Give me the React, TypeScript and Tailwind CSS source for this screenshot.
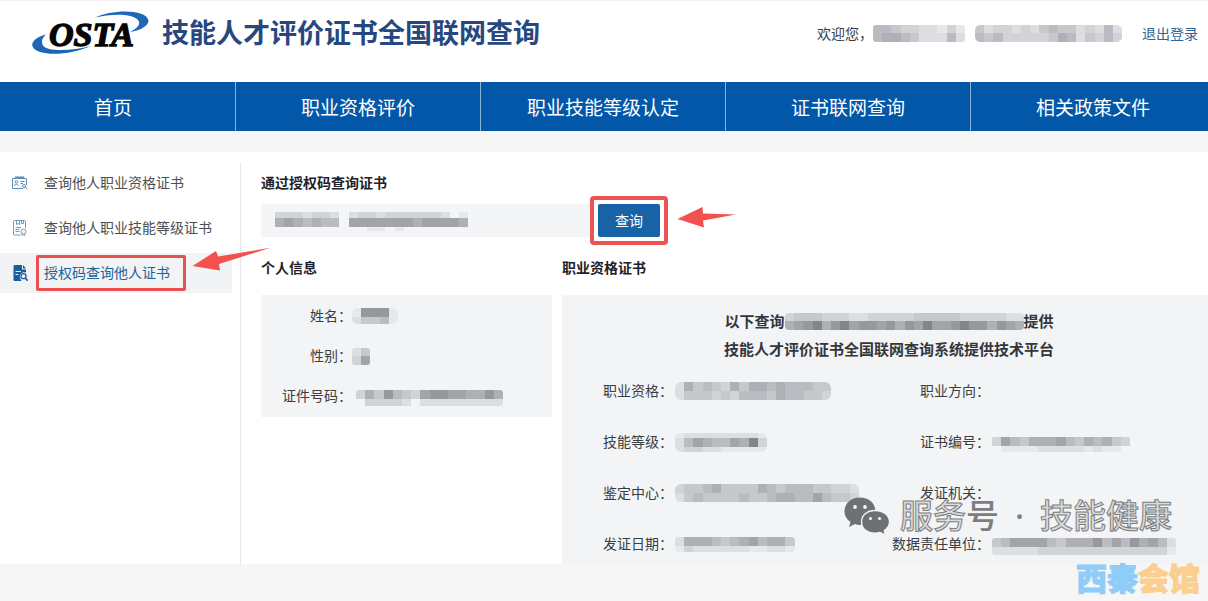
import type { ReactNode } from "react";

const SHADES: Record<string, string> = {
  "1": "#e6e8eb",
  "2": "#dcdee1",
  "3": "#d1d3d7",
  "4": "#c6c8cc",
  "5": "#bbbcc1",
  "6": "#afb0b6",
  "7": "#a3a4aa",
  "8": "#97989e",
  "9": "#84858b",
};

/* Pixelated block hiding private data. Each string is a row of grey levels. */
function Mosaic({
  id,
  rows,
  heights,
  radius = 0,
  className = "",
}: {
  id: string;
  rows: string[];
  heights: number[];
  radius?: number;
  className?: string;
}) {
  const cell = 9.2;
  const width = Math.round(rows[0].length * cell);
  const height = heights.reduce((a, b) => a + b, 0);
  let y = 0;
  return (
    <svg
      width={width}
      height={height}
      viewBox={`0 0 ${width} ${height}`}
      className={`shrink-0 ${className}`}
      aria-hidden="true"
      shapeRendering="crispEdges"
    >
      <clipPath id={id}>
        <rect width={width} height={height} rx={radius} />
      </clipPath>
      <g clipPath={`url(#${id})`}>
        {rows.map((row, r) => {
          const top = y;
          y += heights[r];
          return [...row].map((c, i) =>
            SHADES[c] ? (
              <rect key={`${r}-${i}`} x={i * cell} y={top} width={cell} height={heights[r]} fill={SHADES[c]} />
            ) : null,
          );
        })}
      </g>
    </svg>
  );
}

function Logo() {
  return (
    <svg width="120" height="48" viewBox="30 10 120 48" role="img" aria-label="OSTA" className="shrink-0">
      <path
        d="M95 17.5C112 9 147 9 148.500 20.500C148.500 26 141 30 130 32C139 27.500 141.500 23 137 19C129 13 110 14 95 17.500Z"
        fill="#1f67b5"
      />
      <path
        d="M46 34.500C36 37 31 42 32.500 46.500C37 56.500 69 56 91 46C72 51 47 52 43 45.500C41 41.500 42 38 46 34.500Z"
        fill="#1f67b5"
      />
      <text
        x="49"
        y="46"
        fontFamily="Liberation Serif, serif"
        fontWeight="700"
        fontStyle="italic"
        fontSize="34"
        fill="#050505"
        stroke="#050505"
        strokeWidth="1.4"
      >
        OSTA
      </text>
    </svg>
  );
}

function CardIcon() {
  return (
    <svg width="16" height="16" viewBox="0 0 16 16" fill="none" stroke="#5c8fb5" className="shrink-0" aria-hidden="true">
      <path d="M11 13.500H0.500V3.500H14.500V10" />
      <path d="M3.500 3.200V2.200H11.500V3.200" strokeWidth="1.400" />
      <path d="M2.500 11C2.500 8.800 6.500 8.800 6.500 11M8.500 6.500H12.500M8.500 8.500H11" />
      <circle cx="4.500" cy="6.900" r="1.300" />
      <circle cx="12" cy="11" r="1.500" />
      <path d="M13.200 12.200L15.500 14" />
    </svg>
  );
}

function BadgeIcon() {
  return (
    <svg width="16" height="16" viewBox="0 0 16 16" fill="none" stroke="#6b9dbd" className="shrink-0" aria-hidden="true">
      <path d="M8.500 15H2.500C1.900 15 1.500 14.600 1.500 14V1.500C1.500 0.900 1.900 0.500 2.500 0.500H12.500C13.100 0.500 13.500 0.900 13.500 1.500V8" />
      <path d="M4.500 0.500V4.500L6 3.500L7.500 4.500V0.500M9.500 0.500V3.500H11.500V0.500M3.500 7.500H9M3.500 9.500H7.500M3.500 11.500H7.500" />
      <circle cx="11.500" cy="11.500" r="2.500" />
      <path d="M10 13.500V15.500L11.500 14.800L13 15.500V13.500" strokeWidth="0.800" />
    </svg>
  );
}

function SearchDocIcon() {
  return (
    <svg width="16" height="16" viewBox="0 0 16 16" className="shrink-0" aria-hidden="true">
      <path
        d="M3 0H10V4.500H14V7.500C10.500 6.500 7.800 8.600 7.800 11.300C7.800 13 8.500 14.800 9.700 16H3C2 16 1.500 15.500 1.500 14.500V1.500C1.500 0.500 2 0 3 0Z"
        fill="#155f9f"
      />
      <path d="M11 0L14 3.500H11Z" fill="#155f9f" />
      <path d="M3.500 6.500H9M3.500 9.500H6.500" stroke="#e8f0f6" />
      <circle cx="11.500" cy="11.200" r="2.500" fill="#f3f4f5" stroke="#155f9f" strokeWidth="1.300" />
      <path d="M13.200 13L15.700 15.700" stroke="#155f9f" strokeWidth="1.600" />
    </svg>
  );
}

function WechatIcon() {
  return (
    <svg width="46" height="38" viewBox="0 0 46 38" aria-hidden="true">
      <path
        d="M16 0.500C7 0.500 0.500 6.500 0.500 14.500C0.500 19 2.800 22.500 6.500 25L5 30L11 27C12.700 27.600 14.300 28 16 28C25 28 31.500 22 31.500 14.500C31.500 6.500 25 0.500 16 0.500Z"
        fill="#6f7072"
      />
      <path
        d="M31 13.500C23 13.500 17.500 18.500 17.500 25C17.500 31.500 23 36.300 31 36.300C32.700 36.300 34.500 36 36 35.500L41.500 38L40.300 33.500C43.500 31.500 45.500 28.500 45.500 25C45.500 18.500 39.500 13.500 31 13.500Z"
        fill="#6f7072"
        stroke="#f2f4f6"
        strokeWidth="1.400"
      />
      <g fill="#f2f4f6">
        <circle cx="11" cy="10" r="1.900" />
        <circle cx="21" cy="10" r="1.900" />
        <circle cx="26.500" cy="21.500" r="1.600" />
        <circle cx="35.500" cy="21.500" r="1.600" />
      </g>
    </svg>
  );
}

const NAV = ["首页", "职业资格评价", "职业技能等级认定", "证书联网查询", "相关政策文件"];

function SideLink({ icon, children, active = false }: { icon: ReactNode; children: string; active?: boolean }) {
  return (
    <a
      href="#"
      className={`relative mr-2 flex h-10 items-center gap-4 pl-3 text-sm ${
        active ? "bg-[#f2f3f5] text-[#20619c]" : "text-[#4c4f54]"
      }`}
    >
      {icon}
      <span className="relative whitespace-nowrap">
        {children}
        {active && <span className="absolute -inset-y-2 -left-2 -right-4 rounded-xs border-3 border-[#e9504f]" />}
      </span>
      {active && (
        <svg width="80" height="24" viewBox="0 0 80 24" className="absolute -top-1.5 left-48 z-10" aria-hidden="true">
          <path d="M0.500 19L24 4L26 9.500L78.500 0.800L27 17L28 23.500Z" fill="#f25150" />
        </svg>
      )}
    </a>
  );
}

function Field({ label, labelClass, children }: { label: string; labelClass: string; children?: ReactNode }) {
  return (
    <div className="flex h-10 items-center text-sm text-[#3a3d42]">
      <dt className={`shrink-0 whitespace-nowrap text-right ${labelClass}`}>{label}</dt>
      <dd>{children}</dd>
    </div>
  );
}

export default function App() {
  return (
    <div className="relative min-h-screen overflow-x-hidden bg-[#f6f6f6] font-['Noto_Sans','Noto_Sans_CJK_SC',sans-serif] text-sm text-[#3a3d42]">
      <header className="flex h-[82px] items-center justify-between border-t border-[#f1f1f1] bg-white pr-2.5 pb-4 pl-[30px]">
        <div className="flex items-center gap-3">
          <Logo />
          <h1 className="whitespace-nowrap pb-0.5 text-[27px] leading-9 font-bold text-[#27477f]">
            技能人才评价证书全国联网查询
          </h1>
        </div>
        <div className="flex items-center whitespace-nowrap">
          <span>欢迎您，</span>
          <Mosaic id="m-user" rows={["5543322131", "5665422252"]} heights={[8, 9]} radius={3} />
          <Mosaic
            id="m-account"
            rows={["4233232454423252", "5453333346524353"]}
            heights={[8, 9]}
            radius={5}
            className="ml-2.5"
          />
          <a href="#" className="ml-5 text-[#2d6597]">
            退出登录
          </a>
        </div>
      </header>

      <nav className="overflow-hidden bg-[#0357a8]">
        <ul className="-mr-2 -ml-[9px] grid grid-cols-5">
          {NAV.map((item) => (
            <li key={item} className="border-r border-[#8db6d6]">
              <a href="#" className="flex h-[49px] items-center justify-center pt-1 text-[19px] text-white">
                {item}
              </a>
            </li>
          ))}
        </ul>
      </nav>

      <main className="mt-[21px] flex bg-white pt-2.5">
        <aside className="flex w-[241px] shrink-0 flex-col gap-[5px] border-r border-[#e6e7e9] pt-px">
          <SideLink icon={<CardIcon />}>查询他人职业资格证书</SideLink>
          <SideLink icon={<BadgeIcon />}>查询他人职业技能等级证书</SideLink>
          <SideLink icon={<SearchDocIcon />} active>
            授权码查询他人证书
          </SideLink>
        </aside>

        <div className="min-w-0 flex-1 pl-5">
          <form onSubmit={(e) => e.preventDefault()}>
            <label htmlFor="code" className="flex h-[42px] items-center font-bold text-[#1f2329]">
              通过授权码查询证书
            </label>
            <div className="flex gap-2">
              <div className="relative">
                <input id="code" type="text" className="block h-[33px] w-[329px] bg-[#f4f5f6] px-3 outline-none" />
                <div className="pointer-events-none absolute top-2 left-3.5">
                  <Mosaic
                    id="m-code"
                    rows={["333233202332333333201", "676565507777777677776", "000000000011010000000"]}
                    heights={[6, 9, 4]}
                  />
                </div>
              </div>
              <div className="relative">
                <button type="submit" className="block h-[33px] w-[62px] rounded-xs bg-[#1863a6] text-white">
                  查询
                </button>
                <span className="pointer-events-none absolute -inset-2 rounded-sm border-4 border-[#ec5453]" />
                <svg
                  width="60"
                  height="22"
                  viewBox="0 0 60 22"
                  className="absolute top-0.5 left-[79px]"
                  aria-hidden="true"
                >
                  <path d="M0.500 13L25.500 1L26 7.500L59 8.500L26 14.500L27 21.500Z" fill="#f25150" />
                </svg>
              </div>
            </div>
          </form>

          <div className="mt-1 flex gap-2.5">
            <section className="w-[291px] shrink-0">
              <h2 className="flex h-[54px] items-center font-bold text-[#1f2329]">个人信息</h2>
              <dl className="bg-[#f2f4f6] py-px">
                <Field label="姓名：" labelClass="w-[91px]">
                  <Mosaic id="m-name" rows={["18881", "24451"]} heights={[9, 7]} radius={6} />
                </Field>
                <Field label="性别：" labelClass="w-[91px]">
                  <Mosaic id="m-sex" rows={["24", "37"]} heights={[8, 9]} radius={3} />
                </Field>
                <Field label="证件号码：" labelClass="w-[91px]">
                  <Mosaic
                    id="m-idno"
                    rows={["3648543788776686", "0333320222222222"]}
                    heights={[9, 7]}
                    radius={3}
                    className="mt-1 ml-1"
                  />
                </Field>
              </dl>
            </section>

            <section className="min-w-0 flex-1">
              <h2 className="flex h-[54px] items-center font-bold text-[#1f2329]">职业资格证书</h2>
              <div className="bg-[#f2f4f6] pt-3">
                <p className="flex flex-col items-center pl-2 text-[15px] leading-7 font-bold whitespace-nowrap text-[#34363b]">
                  <span className="flex items-center">
                    以下查询
                    <Mosaic
                      id="m-org"
                      rows={["34443332233333444443333322", "67896897887868797789886876"]}
                      heights={[8, 9]}
                      radius={4}
                    />
                    提供
                  </span>
                  <span>技能人才评价证书全国联网查询系统提供技术平台</span>
                </p>
                <dl className="mt-2 grid grid-cols-2 gap-y-[11px] pr-3">
                  <Field label="职业资格：" labelClass="w-[111px]">
                    <Mosaic
                      id="m-job"
                      rows={["26454364665655544", "24443435554655443"]}
                      heights={[9, 9]}
                      radius={6}
                      className="ml-0.5"
                    />
                  </Field>
                  <Field label="职业方向：" labelClass="w-[111px]" />
                  <Field label="技能等级：" labelClass="w-[111px]">
                    <Mosaic
                      id="m-level"
                      rows={["1222222221", "2576557693", "2332211111"]}
                      heights={[5, 9, 5]}
                      radius={6}
                      className="ml-0.5"
                    />
                  </Field>
                  <Field label="证书编号：" labelClass="w-[111px]">
                    <Mosaic
                      id="m-certno"
                      rows={["375466675465643", "011112222212110"]}
                      heights={[9, 6]}
                      radius={2}
                      className="mt-1 ml-0.5"
                    />
                  </Field>
                  <Field label="鉴定中心：" labelClass="w-[111px]">
                    <Mosaic
                      id="m-centre"
                      rows={["34456444465455544332", "24544445445665575443"]}
                      heights={[9, 9]}
                      radius={6}
                      className="ml-0.5"
                    />
                  </Field>
                  <Field label="发证机关：" labelClass="w-[111px]" />
                  <Field label="发证日期：" labelClass="w-[111px]">
                    <Mosaic
                      id="m-date"
                      rows={["2666545675664", "1322222211221"]}
                      heights={[9, 6]}
                      radius={4}
                      className="ml-0.5"
                    />
                  </Field>
                  <Field label="数据责任单位：" labelClass="w-[111px]">
                    <Mosaic
                      id="m-unit"
                      rows={["45777754666857586752", "22222333333333333331"]}
                      heights={[9, 8]}
                      radius={3}
                      className="mt-1 ml-0.5"
                    />
                  </Field>
                </dl>
              </div>
            </section>
          </div>
        </div>
      </main>

      <div className="pointer-events-none absolute top-[496px] right-9 flex items-center gap-2.5 whitespace-nowrap">
        <WechatIcon />
        <span className="flex text-[33px] leading-10 font-medium text-[#8f9093]/25 [-webkit-text-stroke:1px_#7c7d80]">
          <span>服务</span>
          <span className="text-[#7c7d80] [-webkit-text-stroke:0px]">号</span>
          <span className="px-4 text-[#7c7d80] [-webkit-text-stroke:0px]">·</span>
          <span>技能健康</span>
        </span>
      </div>

      <div className="pointer-events-none absolute top-[560px] right-2 text-[31px] leading-9 font-black whitespace-nowrap text-[#8fcdf9] [-webkit-text-stroke:1px_currentColor]">
        西秦<span className="text-[#fbcf8e]">会馆</span>
      </div>
    </div>
  );
}
